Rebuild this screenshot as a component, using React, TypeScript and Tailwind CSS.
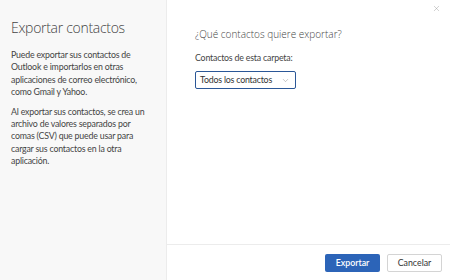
import { X, ChevronDown } from "lucide-react";

export default function App() {
  return (
    <div
      className="relative flex h-[280px] w-[450px] overflow-hidden bg-white text-[#333]"
      style={{ fontFamily: 'Lato, "Open Sans", sans-serif' }}
    >
      {/* left info panel */}
      <aside className="flex w-[167px] shrink-0 flex-col border-r border-[#ececec] bg-[#f8f8f8] pl-[11px] pr-[16px] pt-[16px]">
        <h1
          className="text-[14px] font-light leading-[24px] tracking-[-0.3px] text-[#444]"
          style={{ fontFamily: '"Open Sans", sans-serif' }}
        >
          Exportar contactos
        </h1>
        <p className="mt-[9px] text-[8.8px] leading-[12.4px] tracking-[-0.2px] text-[#444]">
          Puede exportar sus contactos de Outlook e importarlos en otras aplicaciones de correo electrónico,
          como Gmail y Yahoo.
        </p>
        <p className="mt-[7px] text-[8.8px] leading-[12.4px] tracking-[-0.2px] text-[#444]">
          Al exportar sus contactos, se crea un archivo de valores separados por comas (CSV) que puede usar para
          cargar sus contactos en la otra aplicación.
        </p>
      </aside>

      {/* right form */}
      <section className="flex flex-1 flex-col">
        <div className="flex-1 pl-[28px] pt-[26px]">
          <h2
            className="text-[10px] font-light leading-[16px] text-[#444]"
            style={{ fontFamily: '"Open Sans", sans-serif' }}
          >
            ¿Qué contactos quiere exportar?
          </h2>
          <label className="mt-[10px] block text-[8.8px] leading-[12px] tracking-[-0.2px] text-[#444]">
            Contactos de esta carpeta:
          </label>
          <button className="mt-[7px] flex h-[18px] w-[101px] items-center justify-between whitespace-nowrap rounded-[2px] border border-[#2b5797] bg-white pl-[4px] pr-[5px] text-[8.8px] tracking-[-0.2px] text-[#333]">
            <span>Todos los contactos</span>
            <ChevronDown size={9} strokeWidth={1.1} className="text-[#777]" />
          </button>
        </div>
        <footer className="flex h-[36px] items-center justify-end gap-[7px] border-t border-[#ececec] pr-[8px]">
          <button className="flex h-[18px] w-[55px] items-center justify-center rounded-[2px] bg-[#2c64b8] text-[8.8px] font-semibold text-white">
            Exportar
          </button>
          <button className="flex h-[18px] w-[55px] items-center justify-center rounded-[2px] border border-[#d4d4d4] bg-white text-[8.8px] text-[#333]">
            Cancelar
          </button>
        </footer>
      </section>

      <button className="absolute right-[9px] top-[4px] text-[#888]">
        <X size={9} strokeWidth={1} />
      </button>
    </div>
  );
}
